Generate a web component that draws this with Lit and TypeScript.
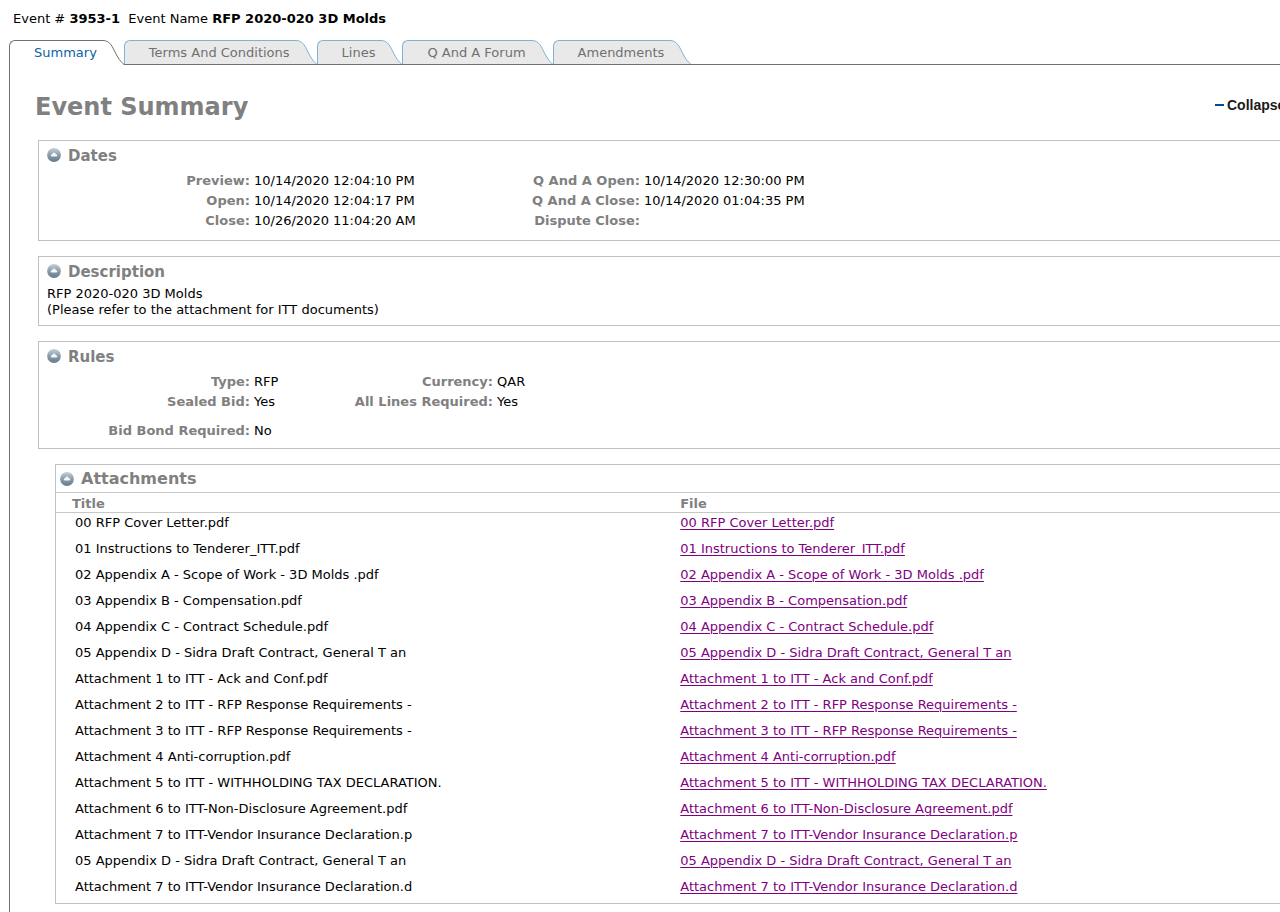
import { LitElement, html, css, svg } from "lit";
import { customElement, property, state } from "lit/decorators.js";
import { classMap } from "lit/directives/class-map.js";

const TABS = ["Summary", "Terms And Conditions", "Lines", "Q And A Forum", "Amendments"];

const DATES = [
  ["Preview:", "10/14/2020 12:04:10 PM", "Q And A Open:", "10/14/2020 12:30:00 PM"],
  ["Open:", "10/14/2020 12:04:17 PM", "Q And A Close:", "10/14/2020 01:04:35 PM"],
  ["Close:", "10/26/2020 11:04:20 AM", "Dispute Close:", ""],
];

const RULES = [
  ["Type:", "RFP", "Currency:", "QAR"],
  ["Sealed Bid:", "Yes", "All Lines Required:", "Yes"],
];

const FILES = [
  "00 RFP Cover Letter.pdf",
  "01 Instructions to Tenderer_ITT.pdf",
  "02 Appendix A - Scope of Work - 3D Molds .pdf",
  "03 Appendix B - Compensation.pdf",
  "04 Appendix C - Contract Schedule.pdf",
  "05 Appendix D - Sidra Draft Contract, General T an",
  "Attachment 1 to ITT - Ack and Conf.pdf",
  "Attachment 2 to ITT - RFP Response Requirements -",
  "Attachment 3 to ITT - RFP Response Requirements -",
  "Attachment 4 Anti-corruption.pdf",
  "Attachment 5 to ITT - WITHHOLDING TAX DECLARATION.",
  "Attachment 6 to ITT-Non-Disclosure Agreement.pdf",
  "Attachment 7 to ITT-Vendor Insurance Declaration.p",
  "05 Appendix D - Sidra Draft Contract, General T an",
  "Attachment 7 to ITT-Vendor Insurance Declaration.d",
];

/** Framed section with a round toggle in front of its heading. */
@customElement("event-section")
export class EventSection extends LitElement {
  @property() heading = "";
  @property({ type: Boolean, reflect: true }) table = false;
  @state() private open = true;

  static styles = css`
    :host {
      display: block;
      border: 1px solid #c0c0c0;
      border-right: 0;
      padding: 0 8px 7px;
    }
    :host([table]) {
      padding: 0;
    }
    .head {
      display: flex;
      align-items: center;
      gap: 7px;
      height: 28px;
      margin-bottom: 1px;
    }
    :host([table]) .head {
      height: 27px;
      margin-bottom: 0;
      padding-left: 4px;
    }
    .toggle {
      width: 14px;
      height: 14px;
      padding: 0;
      border: 0;
      background: none;
      cursor: pointer;
    }
    .toggle svg {
      display: block;
    }
    .title {
      margin: 0;
      padding-top: 2px;
      font-size: 15px;
      line-height: 20px;
      font-weight: bold;
      color: #808080;
    }
    :host([table]) .title {
      padding-top: 0;
      font-size: 16px;
    }
  `;

  render() {
    return html`
      <div class="head">
        <button
          class="toggle"
          aria-label="Toggle ${this.heading}"
          aria-expanded=${this.open ? "true" : "false"}
          @click=${() => (this.open = !this.open)}
        >
          <svg width="14" height="14" viewBox="0 0 14 14" aria-hidden="true">
            <defs>
              <linearGradient id="ball" x1="0" y1="0" x2="0" y2="1">
                <stop offset="0" stop-color="#c3d0d9" />
                <stop offset="0.5" stop-color="#8b9dab" />
                <stop offset="1" stop-color="#647a8b" />
              </linearGradient>
            </defs>
            <circle cx="7" cy="7" r="6.9" fill="url(#ball)" />
            <path d="M7 4.2 L10.4 7.2 L9.6 8.4 H4.4 L3.6 7.2 Z" fill="#f4f8fa" />
          </svg>
        </button>
        <h2 class="title">${this.heading}</h2>
      </div>
      ${this.open ? html`<slot></slot>` : ""}
    `;
  }
}

@customElement("app-root")
export class AppRoot extends LitElement {
  @state() private active = 0;

  static styles = css`
    :host {
      display: flex;
      flex-direction: column;
      min-height: 100vh;
      overflow: hidden;
      background: #fff;
      color: #000;
      font: 13px/16px Verdana, "DejaVu Sans", sans-serif;
    }
    .event {
      padding: 11px 13px 13px;
      white-space: pre-wrap;
    }
    .tabs {
      display: flex;
      padding-left: 9px;
    }
    .tab {
      display: flex;
      height: 24px;
      padding: 0;
      border: 0;
      background: none;
      font: inherit;
      color: #707070;
      cursor: pointer;
    }
    .label {
      box-sizing: border-box;
      height: 100%;
      padding: 4px 6px 0 24px;
      border: solid #7fb3d5;
      border-width: 1px 0 0 1px;
      border-top-left-radius: 6px;
      background: #e9e9e9;
      white-space: nowrap;
    }
    .slope {
      display: block;
      flex: none;
    }
    .face {
      fill: #e9e9e9;
    }
    .edge {
      fill: none;
      stroke: #7fb3d5;
    }
    .current {
      position: relative;
      height: 25px;
      margin-bottom: -1px;
      color: #0b62a4;
    }
    .current .label {
      border-color: #707070;
      background: #fff;
    }
    .current .face {
      fill: #fff;
    }
    .current .edge {
      stroke: #707070;
    }
    .panel {
      flex: 1;
      margin-left: 9px;
      padding: 27px 0 8px 25px;
      border: solid #707070;
      border-width: 1px 0 0 1px;
    }
    .top {
      display: flex;
      align-items: flex-start;
      justify-content: space-between;
      margin-bottom: 19px;
    }
    .page-title {
      margin: 0;
      padding-top: 1px;
      font-size: 24px;
      line-height: 28px;
      color: #808080;
    }
    .collapse {
      display: flex;
      align-items: center;
      gap: 3px;
      width: 65px;
      padding: 5px 0;
      border: 0;
      background: none;
      font: bold 14px/16px Arial, "Liberation Sans", sans-serif;
      color: #1a1a1a;
      white-space: nowrap;
      cursor: pointer;
    }
    .dash {
      flex: none;
      width: 9px;
      height: 2px;
      background: #004b93;
    }
    .sections {
      display: flex;
      flex-direction: column;
      gap: 15px;
      padding-left: 3px;
    }
    .attachments {
      margin-left: 17px;
    }
    .text {
      margin: 0;
    }
    .facts {
      display: grid;
      grid-auto-rows: 20px;
      column-gap: 4px;
      margin: 0;
      padding-top: 1px;
      line-height: 20px;
      white-space: nowrap;
    }
    .dates {
      grid-template-columns: 203px 232px 150px auto;
      padding-bottom: 2px;
    }
    .rules {
      grid-template-columns: 203px 65px 170px auto;
    }
    .bond {
      margin-top: 8px;
    }
    dt {
      text-align: right;
      font-weight: bold;
      color: #808080;
    }
    dd {
      margin: 0;
    }
    table {
      width: 100%;
      table-layout: fixed;
      border-collapse: collapse;
    }
    th {
      height: 17px;
      padding: 2px 0 0;
      border: solid #c8c8c8;
      border-width: 1px 0;
      text-align: left;
      color: #808080;
    }
    td {
      height: 24px;
      padding: 2px 0 0;
      line-height: 16px;
      vertical-align: top;
    }
    .col-title {
      box-sizing: border-box;
      width: 51%;
    }
    th.col-title {
      padding-left: 16px;
    }
    td.col-title {
      padding-left: 19px;
    }
    a {
      color: #800080;
      text-decoration: underline 1px;
      text-underline-offset: 2px;
    }
  `;

  private slope() {
    return html`<svg class="slope" width="21" height="25" viewBox="0 0 21 25" aria-hidden="true">
      ${svg`<path class="face" d="M0 0.5 C7 0.5 9.5 7 12 12 C15 18 17 21 21 24.5 V25 H0 Z" />
      <path class="edge" d="M0 0.5 C7 0.5 9.5 7 12 12 C15 18 17 21 21 24.5" />`}
    </svg>`;
  }

  private facts(rows: string[][]) {
    return rows.map((r) => html`<dt>${r[0]}</dt><dd>${r[1]}</dd><dt>${r[2]}</dt><dd>${r[3]}</dd>`);
  }

  render() {
    return html`
      <header class="event">Event # <b>3953-1</b>  Event Name <b>RFP 2020-020 3D Molds</b></header>
      <nav class="tabs">
        ${TABS.map(
          (t, i) => html`<button
            class=${classMap({ tab: true, current: i === this.active })}
            @click=${() => (this.active = i)}
          >
            <span class="label">${t}</span>${this.slope()}
          </button>`
        )}
      </nav>
      <main class="panel">
        <div class="top">
          <h1 class="page-title">Event Summary</h1>
          <button class="collapse"><span class="dash"></span>Collapse</button>
        </div>
        <div class="sections">
          <event-section heading="Dates">
            <dl class="facts dates">${this.facts(DATES)}</dl>
          </event-section>
          <event-section heading="Description">
            <p class="text">RFP 2020-020 3D Molds<br />(Please refer to the attachment for ITT documents)</p>
          </event-section>
          <event-section heading="Rules">
            <dl class="facts rules">${this.facts(RULES)}</dl>
            <dl class="facts rules bond"><dt>Bid Bond Required:</dt><dd>No</dd></dl>
          </event-section>
          <event-section class="attachments" heading="Attachments" table>
            <table>
              <thead>
                <tr><th class="col-title">Title</th><th>File</th></tr>
              </thead>
              <tbody>
                ${FILES.map(
                  (f) => html`<tr><td class="col-title">${f}</td><td><a href="#">${f}</a></td></tr>`
                )}
              </tbody>
            </table>
          </event-section>
        </div>
      </main>
    `;
  }
}
